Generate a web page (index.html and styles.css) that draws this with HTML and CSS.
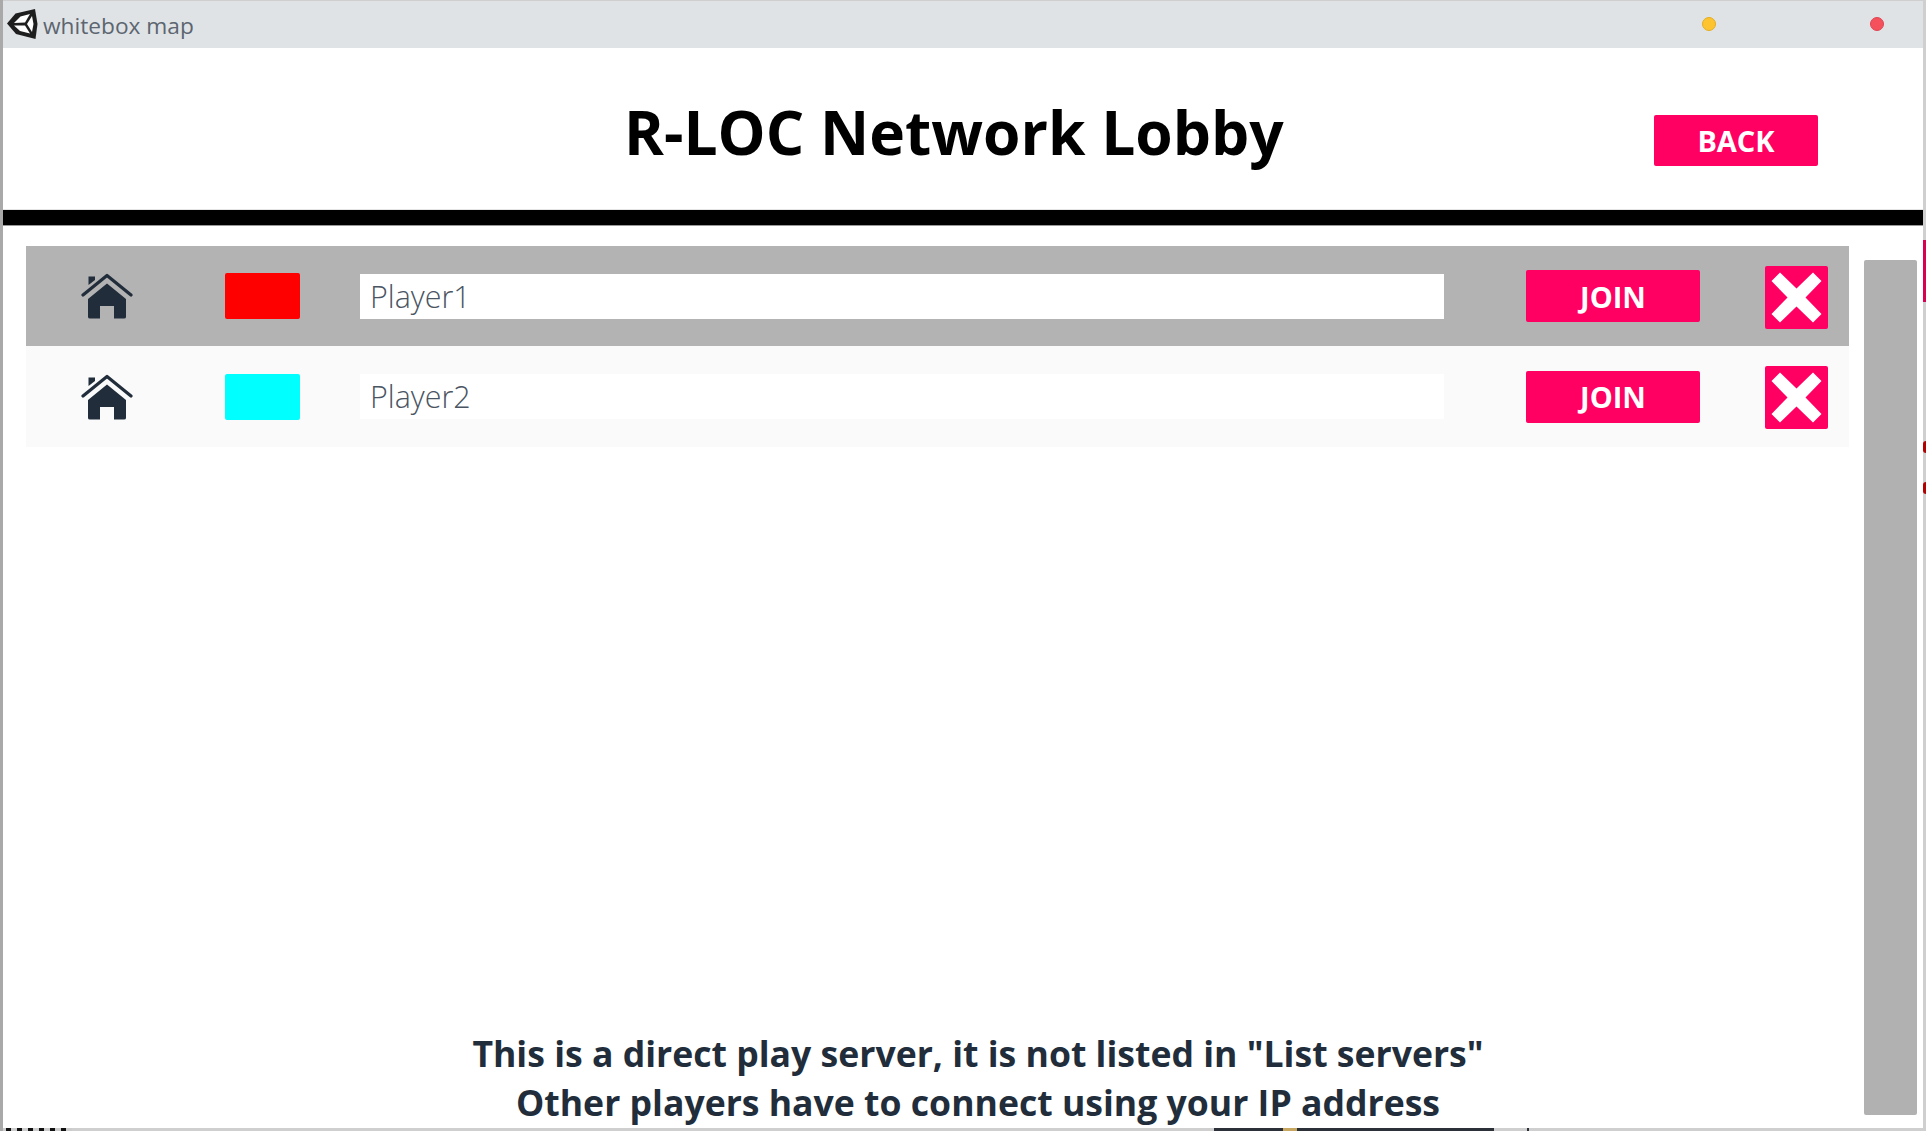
FILE: index.html
```html
<!DOCTYPE html>
<html lang="en">
<head>
<meta charset="utf-8">
<title>whitebox map</title>
<link rel="stylesheet" href="styles.css">
</head>
<body>
<div class="desktop">
  <span class="scrap scrap-pink"></span>
  <span class="scrap scrap-red"></span>
  <span class="scrap scrap-red scrap-red-2"></span>
  <span class="scrap scrap-dark"></span>
  <span class="scrap scrap-gold"></span>
  <span class="scrap scrap-line"></span>
  <span class="scrap scrap-marks"></span>
  <main class="window">
    <header class="titlebar">
      <svg class="logo" viewBox="0 0 32 32" aria-hidden="true">
        <path class="logo-body" d="M1 15.5 L9.5 5.5 L29 1 L31.5 16 L29.5 31 L10 26 Z"/>
        <path class="logo-cut" d="M8 15 L14.5 8.5 L24 6 L19 14.5 Z"/>
        <path class="logo-cut" d="M8 17.5 L19 17.5 L24 25.5 L14 23 Z"/>
        <path class="logo-cut" d="M26 8 L27.5 16 L26 24 L21 16 Z"/>
      </svg>
      <span class="app-name">whitebox map</span>
      <span class="dot dot-yellow"></span>
      <span class="dot dot-red"></span>
    </header>
    <section class="lobby-head">
      <h1 class="lobby-title">R-LOC Network Lobby</h1>
      <button class="btn btn-back">BACK</button>
    </section>
    <div class="rule"></div>
    <section class="body-area">
      <div class="content">
        <ul class="players">
          <li class="player player-active">
            <svg class="home" viewBox="0 0 52 46" aria-hidden="true">
              <path d="M7.5 3.5 L14 3.5 L14 7 L7.5 12 Z"/>
              <path class="roof" d="M2 22 L26 2.5 L50 22"/>
              <path d="M26 10.5 L45 26 L45 44 Q45 45.5 43 45.5 L33 45.5 L33 33 L19 33 L19 45.5 L9 45.5 Q7 45.5 7 44 L7 26 Z"/>
            </svg>
            <span class="swatch swatch-red"></span>
            <span class="name">Player1</span>
            <button class="btn btn-join">JOIN</button>
            <button class="btn-close" aria-label="Remove"><svg viewBox="0 0 63 63" aria-hidden="true"><path d="M15 6.5 L31.5 22.5 L48 6.5 L56.5 15 L40.5 31.5 L56.5 48 L48 56.5 L31.5 40.5 L15 56.5 L6.5 48 L22.5 31.5 L6.5 15 Z"/></svg></button>
          </li>
          <li class="player">
            <svg class="home" viewBox="0 0 52 46" aria-hidden="true">
              <path d="M7.5 3.5 L14 3.5 L14 7 L7.5 12 Z"/>
              <path class="roof" d="M2 22 L26 2.5 L50 22"/>
              <path d="M26 10.5 L45 26 L45 44 Q45 45.5 43 45.5 L33 45.5 L33 33 L19 33 L19 45.5 L9 45.5 Q7 45.5 7 44 L7 26 Z"/>
            </svg>
            <span class="swatch swatch-cyan"></span>
            <span class="name">Player2</span>
            <button class="btn btn-join">JOIN</button>
            <button class="btn-close" aria-label="Remove"><svg viewBox="0 0 63 63" aria-hidden="true"><path d="M15 6.5 L31.5 22.5 L48 6.5 L56.5 15 L40.5 31.5 L56.5 48 L48 56.5 L31.5 40.5 L15 56.5 L6.5 48 L22.5 31.5 L6.5 15 Z"/></svg></button>
          </li>
        </ul>
        <p class="notice">This is a direct play server, it is not listed in "List servers"<br>Other players have to connect using your IP address</p>
      </div>
      <div class="scrollbar"></div>
    </section>
  </main>
</div>
</body>
</html>
```
FILE: styles.css
```css
* { box-sizing: border-box; }
html, body { margin: 0; height: 100%; overflow: hidden; }
body { background: #a9a9a9; font-family: "Open Sans", "Noto Sans", sans-serif; }
.desktop { position: relative; width: 1926px; height: 1131px; padding: 1px 3px 3px 3px; overflow: hidden; background: linear-gradient(90deg, #a9a9a9 0 3px, #cfcfcf 3px); }
.scrap { position: absolute; }
.scrap-pink { left: 1923px; top: 240px; width: 3px; height: 62px; background: #d80050; }
.scrap-red { left: 1923px; top: 441px; width: 3px; height: 12px; border-radius: 6px 0 0 6px; background: #b00000; }
.scrap-red-2 { top: 482px; }
.scrap-dark { left: 1214px; top: 1128px; width: 280px; height: 3px; background: #2c3038; }
.scrap-gold { left: 1283px; top: 1128px; width: 14px; height: 3px; background: #c8a860; }
.scrap-line { left: 1527px; top: 1128px; width: 2px; height: 3px; background: #2c3038; }
.scrap-marks { left: 6px; top: 1128px; width: 66px; height: 3px; background: repeating-linear-gradient(90deg, #111 0 5px, #ccc 5px 11px); }
.window { position: relative; display: flex; flex-direction: column; width: 1920px; height: 1127px; background: #fff; }
.titlebar { display: flex; align-items: center; height: 47px; flex: none; background: #e0e3e6; }
.logo { width: 32px; height: 32px; margin-left: 3px; flex: none; margin-top: -1px; }
.logo-body { fill: #1e1e1e; }
.logo-cut { fill: #fff; }
.app-name { margin-left: 5px; font-size: 22.7px; color: #5c6570; margin-top: 1px; }
.dot { width: 14px; height: 14px; border-radius: 50%; flex: none; margin-top: -1px; }
.dot-yellow { margin-left: auto; background: #fdc430; border: 1px solid #e5ad20; margin-right: 154px; }
.dot-red { background: #f4515c; border: 1px solid #e0444f; margin-right: 39px; }
.lobby-head { display: flex; align-items: flex-start; height: 162px; flex: none; padding-left: 621px; }
.lobby-title { margin: 43px 0 0; font-size: 60.5px; line-height: 82px; font-weight: 700; color: #000; }
.btn { border: 0; padding: 0; border-radius: 2px; background: #ff0062; color: #fff; font-family: inherit; font-weight: 700; font-size: 29px; }
.btn-back { margin: 67px 105px 0 auto; width: 164px; height: 51px; }
.rule { height: 15px; flex: none; background: #000; box-shadow: 0 -1px 0 #e4e4e4, 0 1px 0 #999; }
.body-area { position: relative; display: flex; flex: 1; min-height: 0; }
.content { display: flex; flex-direction: column; width: 1904px; margin-left: 23px; padding-top: 21px; flex: none; }
.players { list-style: none; margin: 0; padding: 0; width: 1823px; }
.player { display: flex; align-items: center; height: 101px; background: #fafafa; }
.player-active { height: 100px; background: #b3b3b3; }
.home { width: 52px; height: 46px; margin: 0 0 0 55px; flex: none; fill: #212d3a; }
.roof { fill: none; stroke: #212d3a; stroke-width: 3.2; stroke-linecap: round; stroke-linejoin: round; }
.swatch { width: 75px; height: 46px; margin: 0 0 0 92px; border-radius: 2px; flex: none; }
.swatch-red { background: #f00; }
.swatch-cyan { background: #0ff; }
.name { display: flex; align-items: center; width: 1084px; height: 45px; margin-left: 60px; padding-left: 10px; background: #fff; color: #4a5563; font-size: 30.4px; font-weight: 300; }
.btn-join { width: 174px; height: 52px; margin-left: 82px; }
.btn-close { display: block; width: 63px; height: 63px; margin: 2px 0 0 65px; padding: 0; border: 0; border-radius: 2px; background: #ff0062; flex: none; }
.btn-close svg { display: block; width: 63px; height: 63px; fill: #fff; }
.notice { margin: auto 0 1px; height: 98px; text-align: center; font-size: 35.6px; line-height: 49px; font-weight: 700; color: #212d3a; }
.scrollbar { position: absolute; left: 1861px; top: 35px; width: 53px; height: 855px; border-radius: 2px; background: #b1b1b1; }
```
